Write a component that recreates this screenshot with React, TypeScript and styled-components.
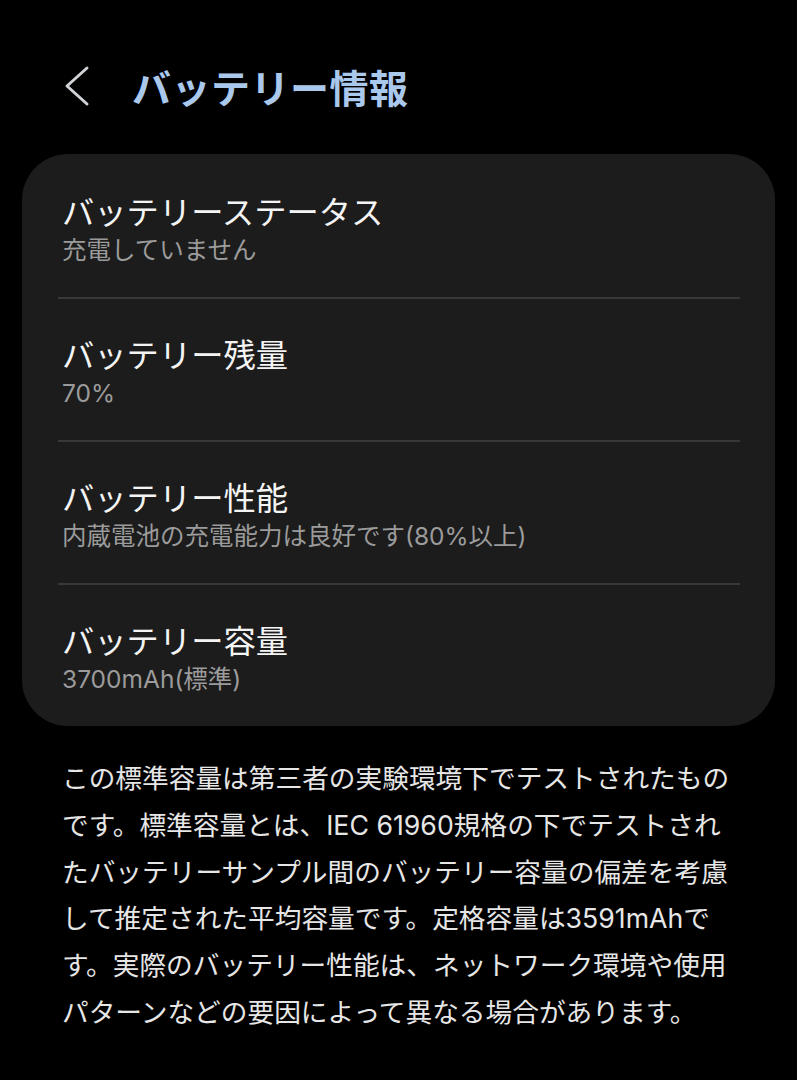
import React from "react";
import styled, { createGlobalStyle } from "styled-components";

const Global = createGlobalStyle`
  html, body { margin: 0; padding: 0; background: #000; }
  body { font-family: "Noto Sans CJK JP", "Noto Sans", sans-serif; color: #fff; }
`;

const Page = styled.div`
  width: 797px;
  min-height: 1080px;
  background: #000;
  box-sizing: border-box;
  padding: 58px 22px 0 22px;
`;

const Header = styled.header`
  display: flex;
  align-items: center;
  height: 56px;
  padding-left: 40px;
  gap: 40px;
`;

const BackButton = styled.button`
  display: flex;
  align-items: center;
  justify-content: center;
  width: 30px;
  height: 44px;
  padding: 0;
  border: none;
  background: transparent;
`;

const Title = styled.h1`
  margin: 0;
  font-size: 39px;
  font-weight: 700;
  color: #a9c8ec;
  line-height: 56px;
  letter-spacing: 0.5px;
`;

const Card = styled.section`
  margin-top: 40px;
  background: #1c1c1c;
  border-radius: 46px;
  display: flex;
  flex-direction: column;
`;

const Row = styled.div<{ $first?: boolean }>`
  margin: 0 35px 0 36px;
  border-top: ${(p) => (p.$first ? "none" : "2px solid #383838")};
  padding: ${(p) => (p.$first ? "36px" : "34px")} 4px 31px;
`;

const RowTitle = styled.div`
  font-size: 32.3px;
  line-height: 40px;
  color: #f4f4f4;
`;

const RowSub = styled.div`
  margin-top: 4px;
  font-family: "Inter", "Noto Sans CJK JP", sans-serif;
  font-size: 24.5px;
  line-height: 32px;
  color: #9b9b9b;
`;

const Note = styled.div`
  margin-top: 29px;
  padding-left: 40px;
  font-family: "Inter", "Noto Sans CJK JP", sans-serif;
  font-size: 26.7px;
  line-height: 46.8px;
  color: #e6e6e6;
`;

const NoteLine = styled.div`
  white-space: nowrap;
`;

const rows = [
  { title: "バッテリーステータス", sub: "充電していません" },
  { title: "バッテリー残量", sub: "70%" },
  { title: "バッテリー性能", sub: "内蔵電池の充電能力は良好です(80%以上)" },
  { title: "バッテリー容量", sub: "3700mAh(標準)" },
];

const noteLines = [
  "この標準容量は第三者の実験環境下でテストされたもの",
  "です。標準容量とは、IEC 61960規格の下でテストされ",
  "たバッテリーサンプル間のバッテリー容量の偏差を考慮",
  "して推定された平均容量です。定格容量は3591mAhで",
  "す。実際のバッテリー性能は、ネットワーク環境や使用",
  "パターンなどの要因によって異なる場合があります。",
];

export default function App() {
  return (
    <>
      <Global />
      <Page>
        <Header>
          <BackButton aria-label="戻る">
            <svg width="30" height="44" viewBox="0 0 30 44" fill="none">
              <path d="M25 4 L5 22 L25 40" stroke="#cfd3d8" strokeWidth="3" strokeLinecap="round" strokeLinejoin="round" />
            </svg>
          </BackButton>
          <Title>バッテリー情報</Title>
        </Header>
        <Card>
          {rows.map((r, i) => (
            <Row key={r.title} $first={i === 0}>
              <RowTitle>{r.title}</RowTitle>
              <RowSub>{r.sub}</RowSub>
            </Row>
          ))}
        </Card>
        <Note>
          {noteLines.map((l) => (
            <NoteLine key={l}>{l}</NoteLine>
          ))}
        </Note>
      </Page>
    </>
  );
}
